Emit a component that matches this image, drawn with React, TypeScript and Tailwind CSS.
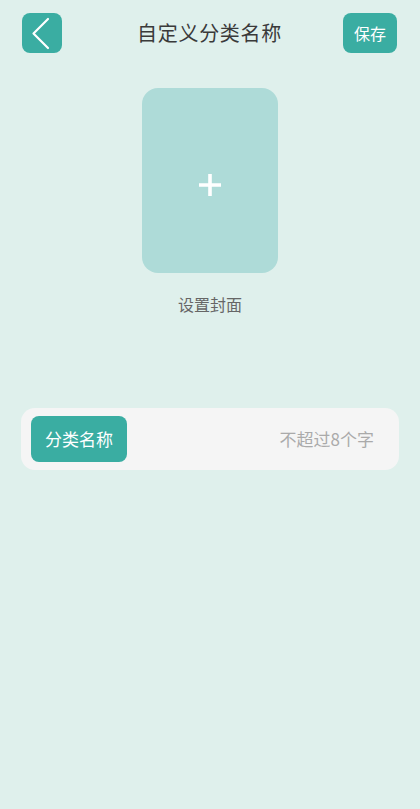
import * as React from "react";

const FONT = { fontFamily: '"Noto Sans CJK SC", "Noto Sans", sans-serif' };

export default function App() {
  const [name, setName] = React.useState("");

  return (
    <div className="min-h-[809px] w-full bg-[#dff0ec]" style={FONT}>
      {/* Header */}
      <div className="flex h-[66px] items-center justify-between pl-[22px] pr-[23px]">
        <div className="w-[54px]">
          <button
            type="button"
            className="flex h-10 w-10 items-center justify-center rounded-lg bg-[#3aada2]"
            aria-label="返回"
          >
            <svg viewBox="0 0 40 40" fill="none" className="h-10 w-10" aria-hidden>
              <path d="M26 6L11.5 20.5 26 35" stroke="white" strokeWidth="2.2" strokeLinecap="round" strokeLinejoin="round" />
            </svg>
          </button>
        </div>
        <h1 className="text-[20px] font-normal tracking-[0.7px] text-[#3a3a3a]">自定义分类名称</h1>
        <button
          type="button"
          className="flex h-10 w-[54px] items-center justify-center rounded-lg bg-[#3aada2] text-[16px] text-white"
        >
          保存
        </button>
      </div>

      {/* Cover */}
      <div className="mt-[22px] flex flex-col items-center">
        <button
          type="button"
          className="flex h-[185px] w-[136px] items-center justify-center rounded-2xl bg-[#aedbd8] pt-[9px]"
          aria-label="设置封面"
        >
          <svg viewBox="0 0 22 22" fill="none" className="h-[22px] w-[22px]" aria-hidden>
            <path d="M11 0v22M0 11h22" stroke="white" strokeWidth="3.6" />
          </svg>
        </button>
        <p className="mt-[19px] text-[16px] text-[#666]">设置封面</p>
      </div>

      {/* Name input */}
      <div className="mx-[21px] mt-[92px] flex h-[62px] items-center rounded-[14px] bg-[#f5f5f5] pl-[10px] pr-[25px]">
        <div className="flex h-[46px] w-[96px] shrink-0 items-center justify-center rounded-lg bg-[#3aada2] text-[17px] text-white">
          分类名称
        </div>
        <input
          value={name}
          onChange={(e) => setName(e.target.value)}
          maxLength={8}
          placeholder="不超过8个字"
          className="min-w-0 flex-1 bg-transparent text-right text-[17px] text-[#333] outline-none placeholder:text-[#aaa]"
          style={FONT}
        />
      </div>
    </div>
  );
}
